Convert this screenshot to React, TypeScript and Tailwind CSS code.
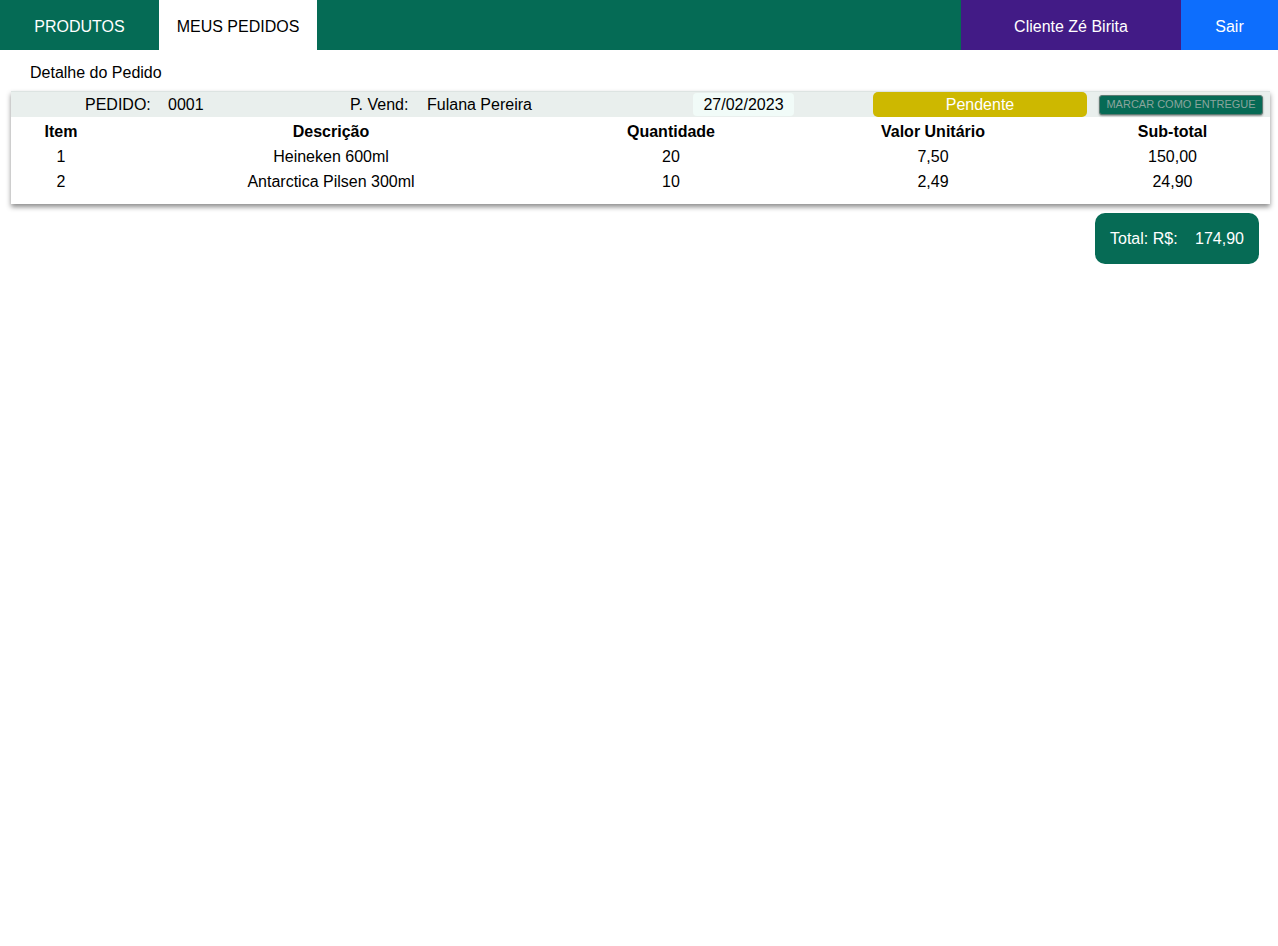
import React from 'react';

const itens = [
  { item: 1, descricao: 'Heineken 600ml', quantidade: 20, valor: '7,50', subtotal: '150,00' },
  { item: 2, descricao: 'Antarctica Pilsen 300ml', quantidade: 10, valor: '2,49', subtotal: '24,90' },
];

const cols = 'grid grid-cols-[100px_440px_240px_284px_1fr] text-center';

const App: React.FC = () => {
  return (
    <div className="min-h-screen bg-white text-black font-['Liberation_Sans',Arial,sans-serif] text-base">
      {/* Navbar */}
      <nav className="flex h-[50px] bg-[#056b55]">
        <a className="w-[159px] flex items-center justify-center pt-[3px] text-white">PRODUTOS</a>
        <a className="w-[158px] flex items-center justify-center pt-[3px] bg-white text-black">MEUS PEDIDOS</a>
        <div className="flex-1" />
        <div className="w-[220px] flex items-center justify-center pt-[3px] bg-[#421b86] text-white">Cliente Zé Birita</div>
        <button className="w-[97px] flex items-center justify-center pt-[3px] bg-[#0d6efd] text-white">Sair</button>
      </nav>

      <h2 className="pl-[30px] pt-[11px] h-[41px]">Detalhe do Pedido</h2>

      <div className="mx-[11px] w-[1259px] bg-white shadow-[0_3px_5px_rgba(0,0,0,0.45)] pb-[10px]">
        {/* Order header */}
        <div className="flex items-center h-[26px] bg-[#e9efed] border-t border-[#dde4e2]">
          <span className="ml-[74px] w-[83px] shrink-0">PEDIDO:</span>
          <span className="w-[182px] shrink-0">0001</span>
          <span className="w-[77px] shrink-0">P. Vend:</span>
          <span className="w-[266px] shrink-0">Fulana Pereira</span>
          <span className="w-[101px] h-[23px] shrink-0 flex items-center justify-center bg-[#f1fbf8] rounded-sm">27/02/2023</span>
          <span className="ml-[79px] w-[214px] h-[25px] shrink-0 flex items-center justify-center bg-[#cdb800] text-white rounded-[5px]">
            Pendente
          </span>
          <button className="ml-[12px] w-[164px] h-[20px] shrink-0 flex items-center justify-center whitespace-nowrap bg-[#066a55] text-[#8aa59d] text-[11px] rounded-[3px] border border-[#5c7a72] shadow-[0_1px_2px_rgba(0,0,0,0.4)]">
            MARCAR COMO ENTREGUE
          </button>
        </div>

        {/* Items */}
        <div className={`${cols} font-bold h-[27px] items-end`}>
          <span>Item</span>
          <span>Descrição</span>
          <span>Quantidade</span>
          <span>Valor Unitário</span>
          <span>Sub-total</span>
        </div>
        {itens.map((i) => (
          <div key={i.item} className={`${cols} h-[25px] items-end`}>
            <span>{i.item}</span>
            <span>{i.descricao}</span>
            <span>{i.quantidade}</span>
            <span>{i.valor}</span>
            <span>{i.subtotal}</span>
          </div>
        ))}
      </div>

      <div className="flex justify-end pr-[19px] mt-[9px]">
        <div className="w-[164px] h-[51px] flex items-center justify-between px-[15px] bg-[#066b55] text-white rounded-[10px]">
          <span>Total: R$:</span>
          <span>174,90</span>
        </div>
      </div>
    </div>
  );
};

export default App;
